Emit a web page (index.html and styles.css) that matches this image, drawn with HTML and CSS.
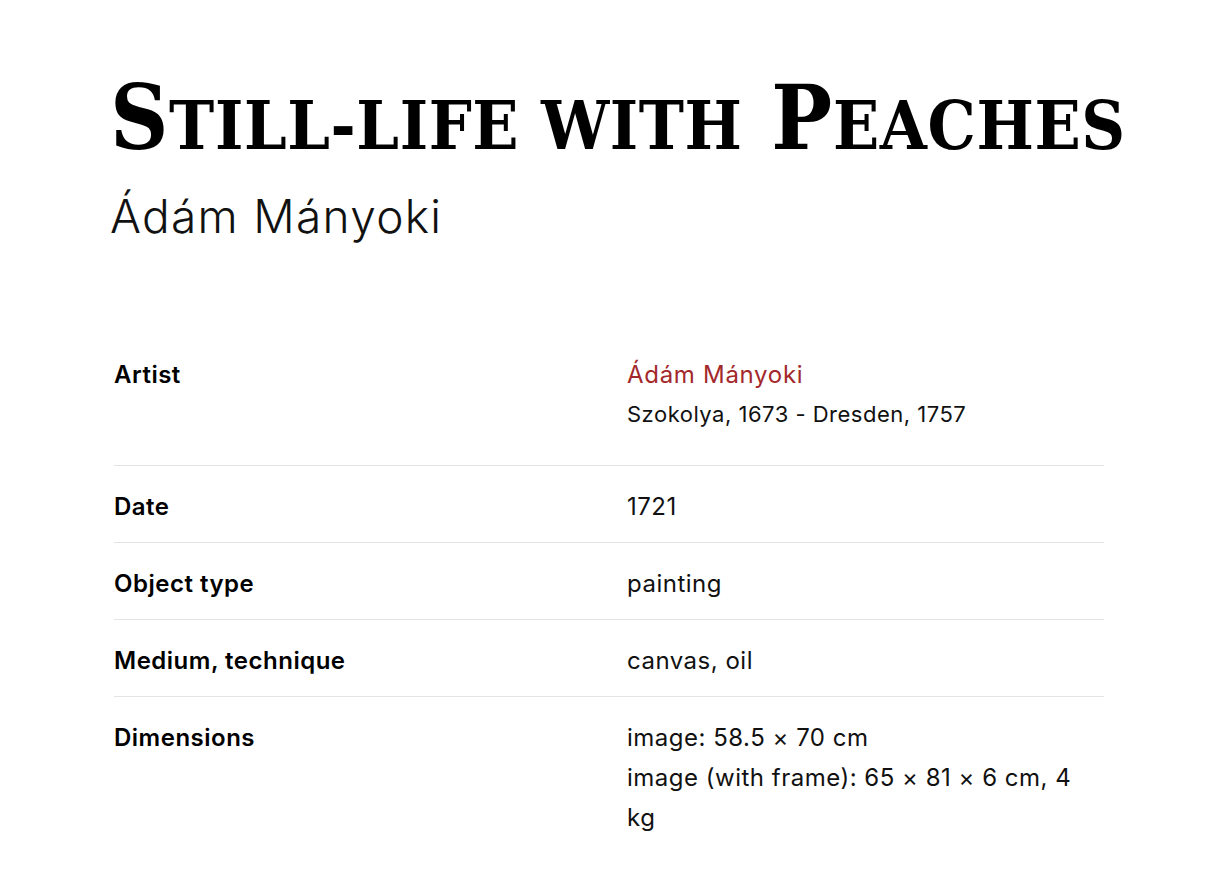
FILE: index.html
```html
<!DOCTYPE html>
<html lang="en">
<head>
<meta charset="utf-8">
<title>Still-life with Peaches</title>
<link rel="stylesheet" href="styles.css">
</head>
<body>
<main class="page">
  <header class="head">
    <h1 class="title"><span class="cap">S</span><span class="sc">till-life with</span> <span class="cap">P</span><span class="sc">eaches</span></h1>
    <p class="artist-name">Ádám Mányoki</p>
  </header>
  <dl class="details">
    <div class="row row-artist">
      <dt class="label">Artist</dt>
      <dd class="value">
        <a class="link" href="#">Ádám Mányoki</a>
        <span class="sub">Szokolya, 1673 - Dresden, 1757</span>
      </dd>
    </div>
    <div class="row">
      <dt class="label">Date</dt>
      <dd class="value">1721</dd>
    </div>
    <div class="row">
      <dt class="label">Object type</dt>
      <dd class="value">painting</dd>
    </div>
    <div class="row">
      <dt class="label">Medium, technique</dt>
      <dd class="value">canvas, oil</dd>
    </div>
    <div class="row row-last">
      <dt class="label">Dimensions</dt>
      <dd class="value">image: 58.5 × 70 cm<br>image (with frame): 65 × 81 × 6 cm, 4 kg</dd>
    </div>
  </dl>
</main>
</body>
</html>
```
FILE: styles.css
```css
html, body {
  margin: 0;
  padding: 0;
  background: #ffffff;
}
body {
  font-family: "Inter", "Liberation Sans", sans-serif;
  color: #111;
}
.page {
  padding: 67px 0 0 110px;
  width: 994px;
}
.title {
  margin: 0;
  font-family: "DejaVu Serif Condensed", "DejaVu Serif", serif;
  font-weight: bold;
  font-size: 90px;
  line-height: 100px;
  letter-spacing: 0.6px;
  white-space: nowrap;
  color: #000;
}
.title .sc {
  font-size: 0.75em;
  line-height: 1;
  text-transform: uppercase;
}
.artist-name {
  margin: 21px 0 0;
  font-family: "Inter", sans-serif;
  font-weight: 300;
  font-size: 46px;
  line-height: 56px;
  letter-spacing: 1.3px;
  color: #111;
}
.details {
  margin: 90px 0 0 4px;
  padding: 0;
}
.row {
  display: grid;
  grid-template-columns: 513px 1fr;
  padding: 21px 0 15px;
  border-bottom: 1px solid #e4e4e4;
}
.row-artist {
  padding-bottom: 32px;
}
.row-last {
  border-bottom: none;
}
.label {
  margin: 0;
  font-weight: 600;
  font-size: 24px;
  line-height: 40px;
  letter-spacing: 0.5px;
  color: #000;
}
.value {
  margin: 0;
  font-size: 24px;
  line-height: 40px;
  letter-spacing: 0.5px;
  color: #111;
  padding-right: 20px;
}
.link {
  display: block;
  color: #a3282c;
  text-decoration: none;
  letter-spacing: 0.7px;
}
.sub {
  display: block;
  font-size: 22px;
  line-height: 38px;
  letter-spacing: 0.5px;
}
```
